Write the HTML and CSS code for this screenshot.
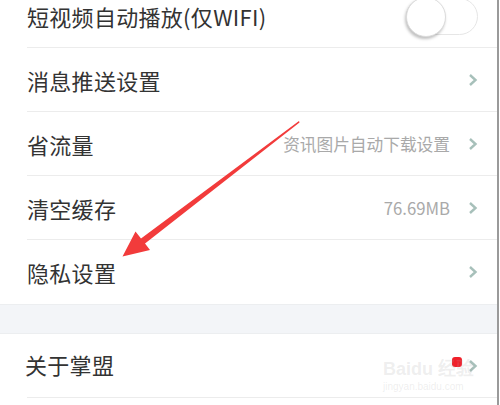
FILE: index.html
```html
<!DOCTYPE html>
<html lang="zh-CN">

<head>
    <meta charset="UTF-8">
    <meta name="viewport" content="width=device-width, initial-scale=1.0">
    <title>设置</title>
    <link rel="stylesheet" href="styles.css">
</head>

<body>
    <div class="screen">
        <div class="group">
            <div class="row">
                <p class="label">短视频自动播放(仅WIFI)</p>
                <div class="toggle"><div class="knob"></div></div>
            </div>
            <div class="row">
                <p class="label">消息推送设置</p>
                <svg class="chev" viewBox="0 0 10 12"><path d="M2 1 L7.5 6 L2 11" /></svg>
            </div>
            <div class="row">
                <p class="label">省流量</p>
                <p class="value">资讯图片自动下载设置</p>
                <svg class="chev" viewBox="0 0 10 12"><path d="M2 1 L7.5 6 L2 11" /></svg>
            </div>
            <div class="row">
                <p class="label">清空缓存</p>
                <p class="value">76.69MB</p>
                <svg class="chev" viewBox="0 0 10 12"><path d="M2 1 L7.5 6 L2 11" /></svg>
            </div>
            <div class="row last">
                <p class="label">隐私设置</p>
                <svg class="chev" viewBox="0 0 10 12"><path d="M2 1 L7.5 6 L2 11" /></svg>
            </div>
        </div>

        <div class="gap"></div>

        <div class="group">
            <div class="row">
                <p class="label about">关于掌盟</p>
                <span class="badge"></span>
                <svg class="chev" viewBox="0 0 10 12"><path d="M2 1 L7.5 6 L2 11" /></svg>
            </div>
        </div>

        <!-- red pointer arrow drawn over the list -->
        <svg class="pointer" viewBox="0 0 500 405">
            <path d="M299 121 L141 238.5 L135.5 231.5 L122.5 256.5 L150 250 L145 243.5 L299.5 122.5 Z" />
        </svg>

        <div class="mark">
            <span class="mark-logo">Bai<b>du</b> 经验</span>
            <span class="mark-url">jingyan.baidu.com</span>
        </div>
    </div>
</body>

</html>
```

FILE: styles.css
```css
* {
    margin: 0;
    padding: 0;
    box-sizing: border-box;
}

body {
    width: 500px;
    height: 405px;
    overflow: hidden;
    background: #fff;
    font-family: "Noto Sans CJK SC", "Noto Sans", sans-serif;
}

.screen {
    position: relative;
    width: 499px;
    height: 405px;
    overflow: hidden;
    border-right: 2px solid #9a9a9a;
}

.group {
    background: #fff;
}

.group:first-child {
    margin-top: -16px;
}

.row {
    display: flex;
    align-items: center;
    height: 64px;
    margin-left: 27px;
    padding-right: 19px;
    border-bottom: 1px solid #ececec;
}

.row.last {
    border-bottom: none;
}

.label {
    flex: 1;
    font-size: 22px;
    color: #333;
    letter-spacing: 0.3px;
}

.label.about {
    margin-left: -2px;
    margin-top: -3px;
}

.value {
    font-size: 16.7px;
    color: #a9a9a9;
    margin-right: 18px;
}

.chev {
    width: 10px;
    height: 12px;
    fill: none;
    stroke: #a7c0ba;
    stroke-width: 2.4;
    stroke-linejoin: miter;
}

.toggle {
    position: relative;
    width: 72px;
    height: 37px;
    margin-top: 2px;
    margin-right: 0;
    border: 1px solid #e6e6e6;
    border-radius: 19px;
    background: #fff;
}

.knob {
    position: absolute;
    left: -1px;
    top: -2px;
    width: 40px;
    height: 40px;
    border-radius: 50%;
    background: #fff;
    border: 1px solid #dcdcdc;
    box-shadow: -1px 2px 3px rgba(0, 0, 0, 0.25);
}

.gap {
    height: 30px;
    background: #f3f5f8;
    border-top: 1px solid #eceef0;
    border-bottom: 1px solid #eceef0;
}

.badge {
    width: 10px;
    height: 10px;
    border-radius: 3px;
    background: #f0202a;
    margin-right: 6px;
    margin-top: -8px;
}

.pointer {
    position: absolute;
    left: 0;
    top: 0;
    width: 500px;
    height: 405px;
    fill: #f23b3b;
}

.mark {
    position: absolute;
    left: 383px;
    top: 360px;
    display: flex;
    flex-direction: column;
    color: rgba(170, 170, 170, 0.2);
    font-family: "Liberation Sans", sans-serif;
    line-height: 1;
}

.mark-logo {
    font-size: 18px;
    font-weight: bold;
}

.mark-url {
    font-size: 10px;
    margin-top: 4px;
}
```
